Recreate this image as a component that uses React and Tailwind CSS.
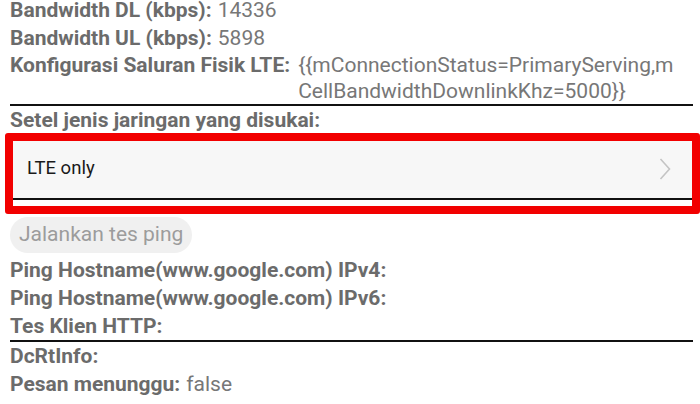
// Radio info screen: bandwidth stats, preferred network picker, ping tests
const font = { fontFamily: 'Roboto, "Noto Sans", sans-serif' };

function InfoRow({ label, value }) {
  return (
    <div className="flex h-[28px] items-center whitespace-nowrap text-[21px] leading-[28px]">
      <span className="font-bold text-[#6b6b6b]">{label}</span>
      {value !== undefined && <span className="ml-[6px] text-[#777777]">{value}</span>}
    </div>
  );
}

function Divider() {
  return <div className="h-[2px] bg-[#111111]" />;
}

export default function App() {
  return (
    <div className="h-[404px] w-[700px] overflow-hidden bg-white" style={font}>
      <div className="mt-[-4px] pl-[10px] pr-[7px]">
        <InfoRow label="Bandwidth DL (kbps):" value="14336" />
        <InfoRow label="Bandwidth UL (kbps):" value="5898" />
        <div className="flex whitespace-nowrap text-[21px] leading-[26px]">
          <span className="font-bold text-[#6b6b6b]">Konfigurasi Saluran Fisik LTE:</span>
          <div className="ml-[8px] text-[#777777]">
            <div>{'{{mConnectionStatus=PrimaryServing,m'}</div>
            <div>{'CellBandwidthDownlinkKhz=5000}}'}</div>
          </div>
        </div>
        <Divider />

        <InfoRow label="Setel jenis jaringan yang disukai:" />

        <div className="relative">
          <div className="flex h-[64px] items-center justify-between bg-[#f7f7f7] pl-[17px] pr-[22px] pt-[6px]">
            <span className="text-[18.5px] text-[#1a1a1a]">LTE only</span>
            <svg width="12" height="24" viewBox="0 0 12 24" fill="none">
              <path d="M1.5 2 L10.5 12 L1.5 22" stroke="#c4c4c4" strokeWidth="1.6" />
            </svg>
          </div>
          <Divider />
          <div className="h-[6px]" />
          {/* red highlight frame around the picker */}
          <div className="pointer-events-none absolute top-[-1px] bottom-[-8px] left-[-5px] right-[-7px] rounded-[3px] border-[8px] border-[#f20000]" />
        </div>

        <button className="mt-[11px] flex h-[36px] items-center rounded-full bg-[#f0f0f0] px-[9px] text-[21px] text-[#9c9c9c]">
          Jalankan tes ping
        </button>

        <div className="mt-[3px]">
          <InfoRow label="Ping Hostname(www.google.com) IPv4:" />
          <InfoRow label="Ping Hostname(www.google.com) IPv6:" />
          <InfoRow label="Tes Klien HTTP:" />
        </div>
        <Divider />
        <InfoRow label="DcRtInfo:" />
        <InfoRow label="Pesan menunggu:" value="false" />
      </div>
    </div>
  );
}
